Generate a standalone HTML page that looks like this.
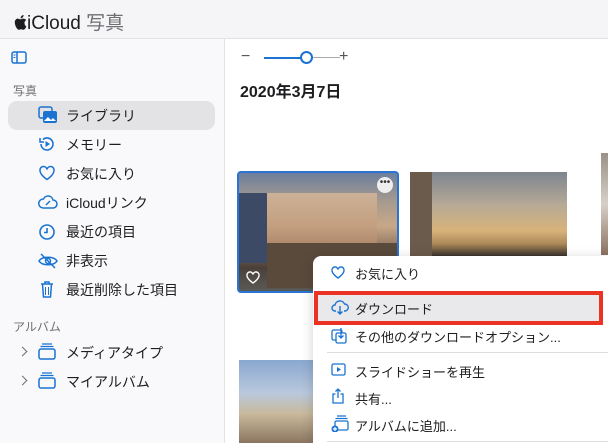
<!DOCTYPE html>
<html style="width:608px;height:443px;overflow:hidden"><head><meta charset="utf-8"><style>
*{margin:0;padding:0;box-sizing:border-box}
body{width:608px;height:443px;overflow:hidden;position:relative;background:#fff;font-family:"Liberation Sans","Noto Sans CJK JP",sans-serif;color:#1d1d1f}
.hdr{position:absolute;left:0;top:0;width:608px;height:39px;background:#f5f5f7;border-bottom:1px solid #e2e2e5}
.hdr .t{position:absolute;left:14px;top:8px;font-size:19px;color:#1d1d1f}
.hdr .t span{color:#6e6e73}
.side{position:absolute;left:0;top:39px;width:225px;height:404px;background:#f9f9fb;border-right:1px solid #e3e3e6}
.abs{position:absolute}
.sec{position:absolute;left:13px;font-size:12px;color:#6e6e73}
.it{position:absolute;left:66px;font-size:14px;color:#1d1d1f}
.ic{position:absolute;left:38px}
.sel{position:absolute;left:8px;top:62px;width:207px;height:29px;background:#e3e3e6;border-radius:9px}
.menu{position:absolute;left:313px;top:256px;width:295px;height:187px;overflow:hidden;background:#fff;border-radius:8px 0 0 0;box-shadow:0 2px 12px rgba(0,0,0,.18)}
.mi{position:absolute;left:42px;font-size:13px;color:#1d1d1f}
.mic{position:absolute;left:18px}
.chev{position:absolute;left:19px;width:7px;height:7px;border-right:1.5px solid #6e6e73;border-bottom:1.5px solid #6e6e73;transform:rotate(-45deg)}
</style></head><body>
<div class="hdr"><div class="t"><svg width="13" height="15" viewBox="0 0 13 15" style="vertical-align:-1px"><path d="M10.5 8c0-2 1.6-2.8 1.7-2.9-1-1.4-2.4-1.5-2.9-1.5-1.2-.1-2.4.7-3 .7s-1.6-.7-2.6-.7C2.300 3.600 .8 4.900.8 7.400c0 3.100 2.300 7.400 4 7.400.8 0 1.300-.6 2.300-.6s1.400.6 2.300.6c1.600 0 2.900-3.300 3-3.400-.1 0-1.900-.8-1.900-3.400zM8.800 2.300c.5-.7.9-1.500.8-2.300-.8 0-1.700.5-2.200 1.100-.5.600-.9 1.400-.8 2.200.9.100 1.700-.4 2.200-1z" fill="#1d1d1f"/></svg>iCloud <span>写真</span></div></div>
<div class="side">
<svg class="abs" style="left:11px;top:12px" width="16" height="13"><rect x="1" y="1" width="14" height="11" rx="2" fill="none" stroke="#1a73d1" stroke-width="1.5"/><line x1="6" y1="1" x2="6" y2="12" stroke="#1a73d1" stroke-width="1.5"/><line x1="2.5" y1="4" x2="4.5" y2="4" stroke="#1a73d1"/><line x1="2.5" y1="6.5" x2="4.5" y2="6.5" stroke="#1a73d1"/></svg>
<div class="sec" style="top:43px">写真</div>
<div class="sel"></div>
<svg class="ic" style="top:67px" width="20" height="18"><rect x="1" y="1" width="13" height="11" rx="2" fill="none" stroke="#1a73d1" stroke-width="1.5"/><rect x="5" y="5" width="14" height="12" rx="2" fill="#1a73d1"/><path d="M6 15l4-4 3 3 2-2 3 3z" fill="#fff"/></svg>
<div class="it" style="top:67px">ライブラリ</div>
<svg class="ic" style="top:96px" width="18" height="18"><path d="M3 9a6 6 0 1 0 2-4.500" fill="none" stroke="#1a73d1" stroke-width="1.6"/><path d="M2 3v4h4" fill="none" stroke="#1a73d1" stroke-width="1.5"/><path d="M7.500 6v6l4.500-3z" fill="#1a73d1"/></svg>
<div class="it" style="top:96px">メモリー</div>
<svg class="ic" style="top:126px" width="18" height="16"><path d="M9 14.500S2 10 2 5.500a3.500 3.500 0 0 1 7-1 3.500 3.500 0 0 1 7 1C16 10 9 14.500 9 14.500z" fill="none" stroke="#1a73d1" stroke-width="1.5"/></svg>
<div class="it" style="top:125px">お気に入り</div>
<svg class="ic" style="top:155px" width="20" height="16"><path d="M5 14h10a4 4 0 0 0 0-8 5 5 0 0 0-9.500-1A4.500 4.500 0 0 0 5 14z" fill="none" stroke="#1a73d1" stroke-width="1.5"/><path d="M8 11l4-4" stroke="#1a73d1" stroke-width="1.5"/></svg>
<div class="it" style="top:154px">iCloudリンク</div>
<svg class="ic" style="top:184px" width="18" height="18"><circle cx="9" cy="9" r="7" fill="none" stroke="#1a73d1" stroke-width="1.6"/><path d="M9 5v4.500H6" fill="none" stroke="#1a73d1" stroke-width="1.6"/></svg>
<div class="it" style="top:183px">最近の項目</div>
<svg class="ic" style="top:214px" width="20" height="16"><path d="M1 8c3-5 15-5 18 0-3 5-15 5-18 0z" fill="none" stroke="#1a73d1" stroke-width="1.5"/><circle cx="10" cy="8" r="2.500" fill="none" stroke="#1a73d1" stroke-width="1.5"/><line x1="3" y1="1" x2="17" y2="15" stroke="#1a73d1" stroke-width="1.5"/></svg>
<div class="it" style="top:212px">非表示</div>
<svg class="ic" style="top:241px" width="18" height="18"><path d="M3 4h12M7 4V2h4v2M4.500 4l1 13h7l1-13" fill="none" stroke="#1a73d1" stroke-width="1.5"/><path d="M7.500 7v8M10.500 7v8" stroke="#1a73d1"/></svg>
<div class="it" style="top:241px">最近削除した項目</div>
<div class="sec" style="top:279px">アルバム</div>
<div class="chev" style="top:309px"></div>
<svg class="ic" style="top:304px" width="18" height="17"><path d="M4 1h10M2.500 3.500h13" stroke="#1a73d1" stroke-width="1.3"/><rect x="1" y="6" width="16" height="10" rx="2" fill="none" stroke="#1a73d1" stroke-width="1.5"/></svg>
<div class="it" style="top:304px">メディアタイプ</div>
<div class="chev" style="top:338px"></div>
<svg class="ic" style="top:333px" width="18" height="17"><path d="M4 1h10M2.500 3.500h13" stroke="#1a73d1" stroke-width="1.3"/><rect x="1" y="6" width="16" height="10" rx="2" fill="none" stroke="#1a73d1" stroke-width="1.5"/></svg>
<div class="it" style="top:333px">マイアルバム</div>
</div>
<div class="abs" style="left:241px;top:48px;font-size:16px;color:#555">−</div>
<div class="abs" style="left:264px;top:57px;width:43px;height:2px;background:#1a73d1"></div>
<div class="abs" style="left:307px;top:57px;width:33px;height:1px;background:#aaa"></div>
<div class="abs" style="left:300px;top:51px;width:13px;height:13px;border-radius:50%;background:#fff;border:2px solid #1a73d1"></div>
<div class="abs" style="left:339px;top:48px;font-size:16px;color:#555">+</div>
<div class="abs" style="left:240px;top:78px;font-size:16px;font-weight:bold;color:#1d1d1f">2020年3月7日</div>
<div class="abs" style="left:237px;top:171px;width:162px;height:122px;border:2px solid #2a74d6;border-radius:4px;overflow:hidden;background:linear-gradient(180deg,#6d7f9c 0%,#a89b8e 25%,#c7a888 45%,#8a6e5a 65%,#4a4039 80%,#5a5a55 100%)">
<div class="abs" style="left:0;top:20px;width:28px;height:70px;background:#3c4a66"></div>
<div class="abs" style="left:28px;top:20px;width:110px;height:55px;background:linear-gradient(180deg,#d9b899,#b48a6b);opacity:.8"></div>
<div class="abs" style="left:28px;top:70px;width:132px;height:45px;background:#5a4a3c"></div>
<div class="abs" style="left:138px;top:4px;width:16px;height:16px;border-radius:50%;background:#eee;color:#333;font-size:10px;text-align:center;line-height:12px">•••</div>
<svg class="abs" style="left:7px;top:98px" width="14" height="13"><path d="M7 12S1 8 1 4.500a3 3 0 0 1 6-1 3 3 0 0 1 6 1C13 8 7 12 7 12z" fill="none" stroke="#fff" stroke-width="1.4"/></svg>
</div>
<div class="abs" style="left:410px;top:172px;width:157px;height:84px;background:linear-gradient(180deg,#7e8590 0%,#b7aa96 40%,#d8b27a 70%,#ae8a5a 85%,#3a332c 100%)"></div>
<div class="abs" style="left:410px;top:172px;width:22px;height:84px;background:#6b5b4d"></div>
<div class="abs" style="left:601px;top:153px;width:7px;height:102px;background:linear-gradient(180deg,#9a9088,#d8d0c8,#8a7060)"></div>
<div class="abs" style="left:239px;top:360px;width:74px;height:83px;background:linear-gradient(180deg,#8aa8d0 0%,#b9c8dc 40%,#c9b99b 65%,#8b7560 100%)"></div>
<div class="menu">
<svg class="mic" style="top:10px" width="14" height="13"><path d="M7 12S1 8 1 4.500a3 3 0 0 1 6-1 3 3 0 0 1 6 1C13 8 7 12 7 12z" fill="none" stroke="#1a73d1" stroke-width="1.4"/></svg>
<div class="mi" style="top:8px">お気に入り</div>
<div class="abs" style="left:1px;top:35px;width:289px;height:34px;background:#e9e9ec;border:4px solid #ea3323"></div>
<svg class="mic" style="top:44px" width="18" height="15"><path d="M5 11H4a3 3 0 0 1 0-6 5 5 0 0 1 9.500-1A3.500 3.500 0 0 1 14 11h-1" fill="none" stroke="#1a73d1" stroke-width="1.4"/><path d="M9 6v8M6.500 11.500L9 14l2.500-2.500" fill="none" stroke="#1a73d1" stroke-width="1.4"/></svg>
<div class="mi" style="top:43px">ダウンロード</div>
<svg class="mic" style="top:71px" width="16" height="17"><rect x="1" y="3" width="10" height="10" rx="1.500" fill="none" stroke="#1a73d1" stroke-width="1.3"/><rect x="5" y="6" width="10" height="10" rx="1.500" fill="#fff" stroke="#1a73d1" stroke-width="1.3"/><path d="M10 1v10M7.500 8.500L10 11l2.500-2.500" fill="none" stroke="#1a73d1" stroke-width="1.3"/></svg>
<div class="mi" style="top:71px">その他のダウンロードオプション...</div>
<div class="abs" style="left:14px;top:96px;width:290px;height:1px;background:#ddd"></div>
<svg class="mic" style="top:107px" width="15" height="13"><rect x="1" y="1" width="13" height="11" rx="1.500" fill="none" stroke="#1a73d1" stroke-width="1.3"/><path d="M6 4v5l4-2.500z" fill="#1a73d1"/></svg>
<div class="mi" style="top:106px">スライドショーを再生</div>
<svg class="mic" style="top:132px" width="14" height="16"><path d="M4.500 6H2v9h10V6H9.500M7 10V1M4.500 3.500L7 1l2.500 2.500" fill="none" stroke="#1a73d1" stroke-width="1.3"/></svg>
<div class="mi" style="top:133px">共有...</div>
<svg class="mic" style="top:159px" width="18" height="17"><path d="M6 1h9M4.500 3.500h12" stroke="#1a73d1" stroke-width="1.2"/><rect x="4" y="6" width="13" height="9" rx="1.500" fill="none" stroke="#1a73d1" stroke-width="1.3"/><circle cx="4" cy="14" r="3.500" fill="#1a73d1"/><path d="M4 12v4M2 14h4" stroke="#fff" stroke-width="1.2"/></svg>
<div class="mi" style="top:160px">アルバムに追加...</div>
<div class="abs" style="left:14px;top:185px;width:290px;height:1px;background:#ddd"></div>
</div>
</body></html>
